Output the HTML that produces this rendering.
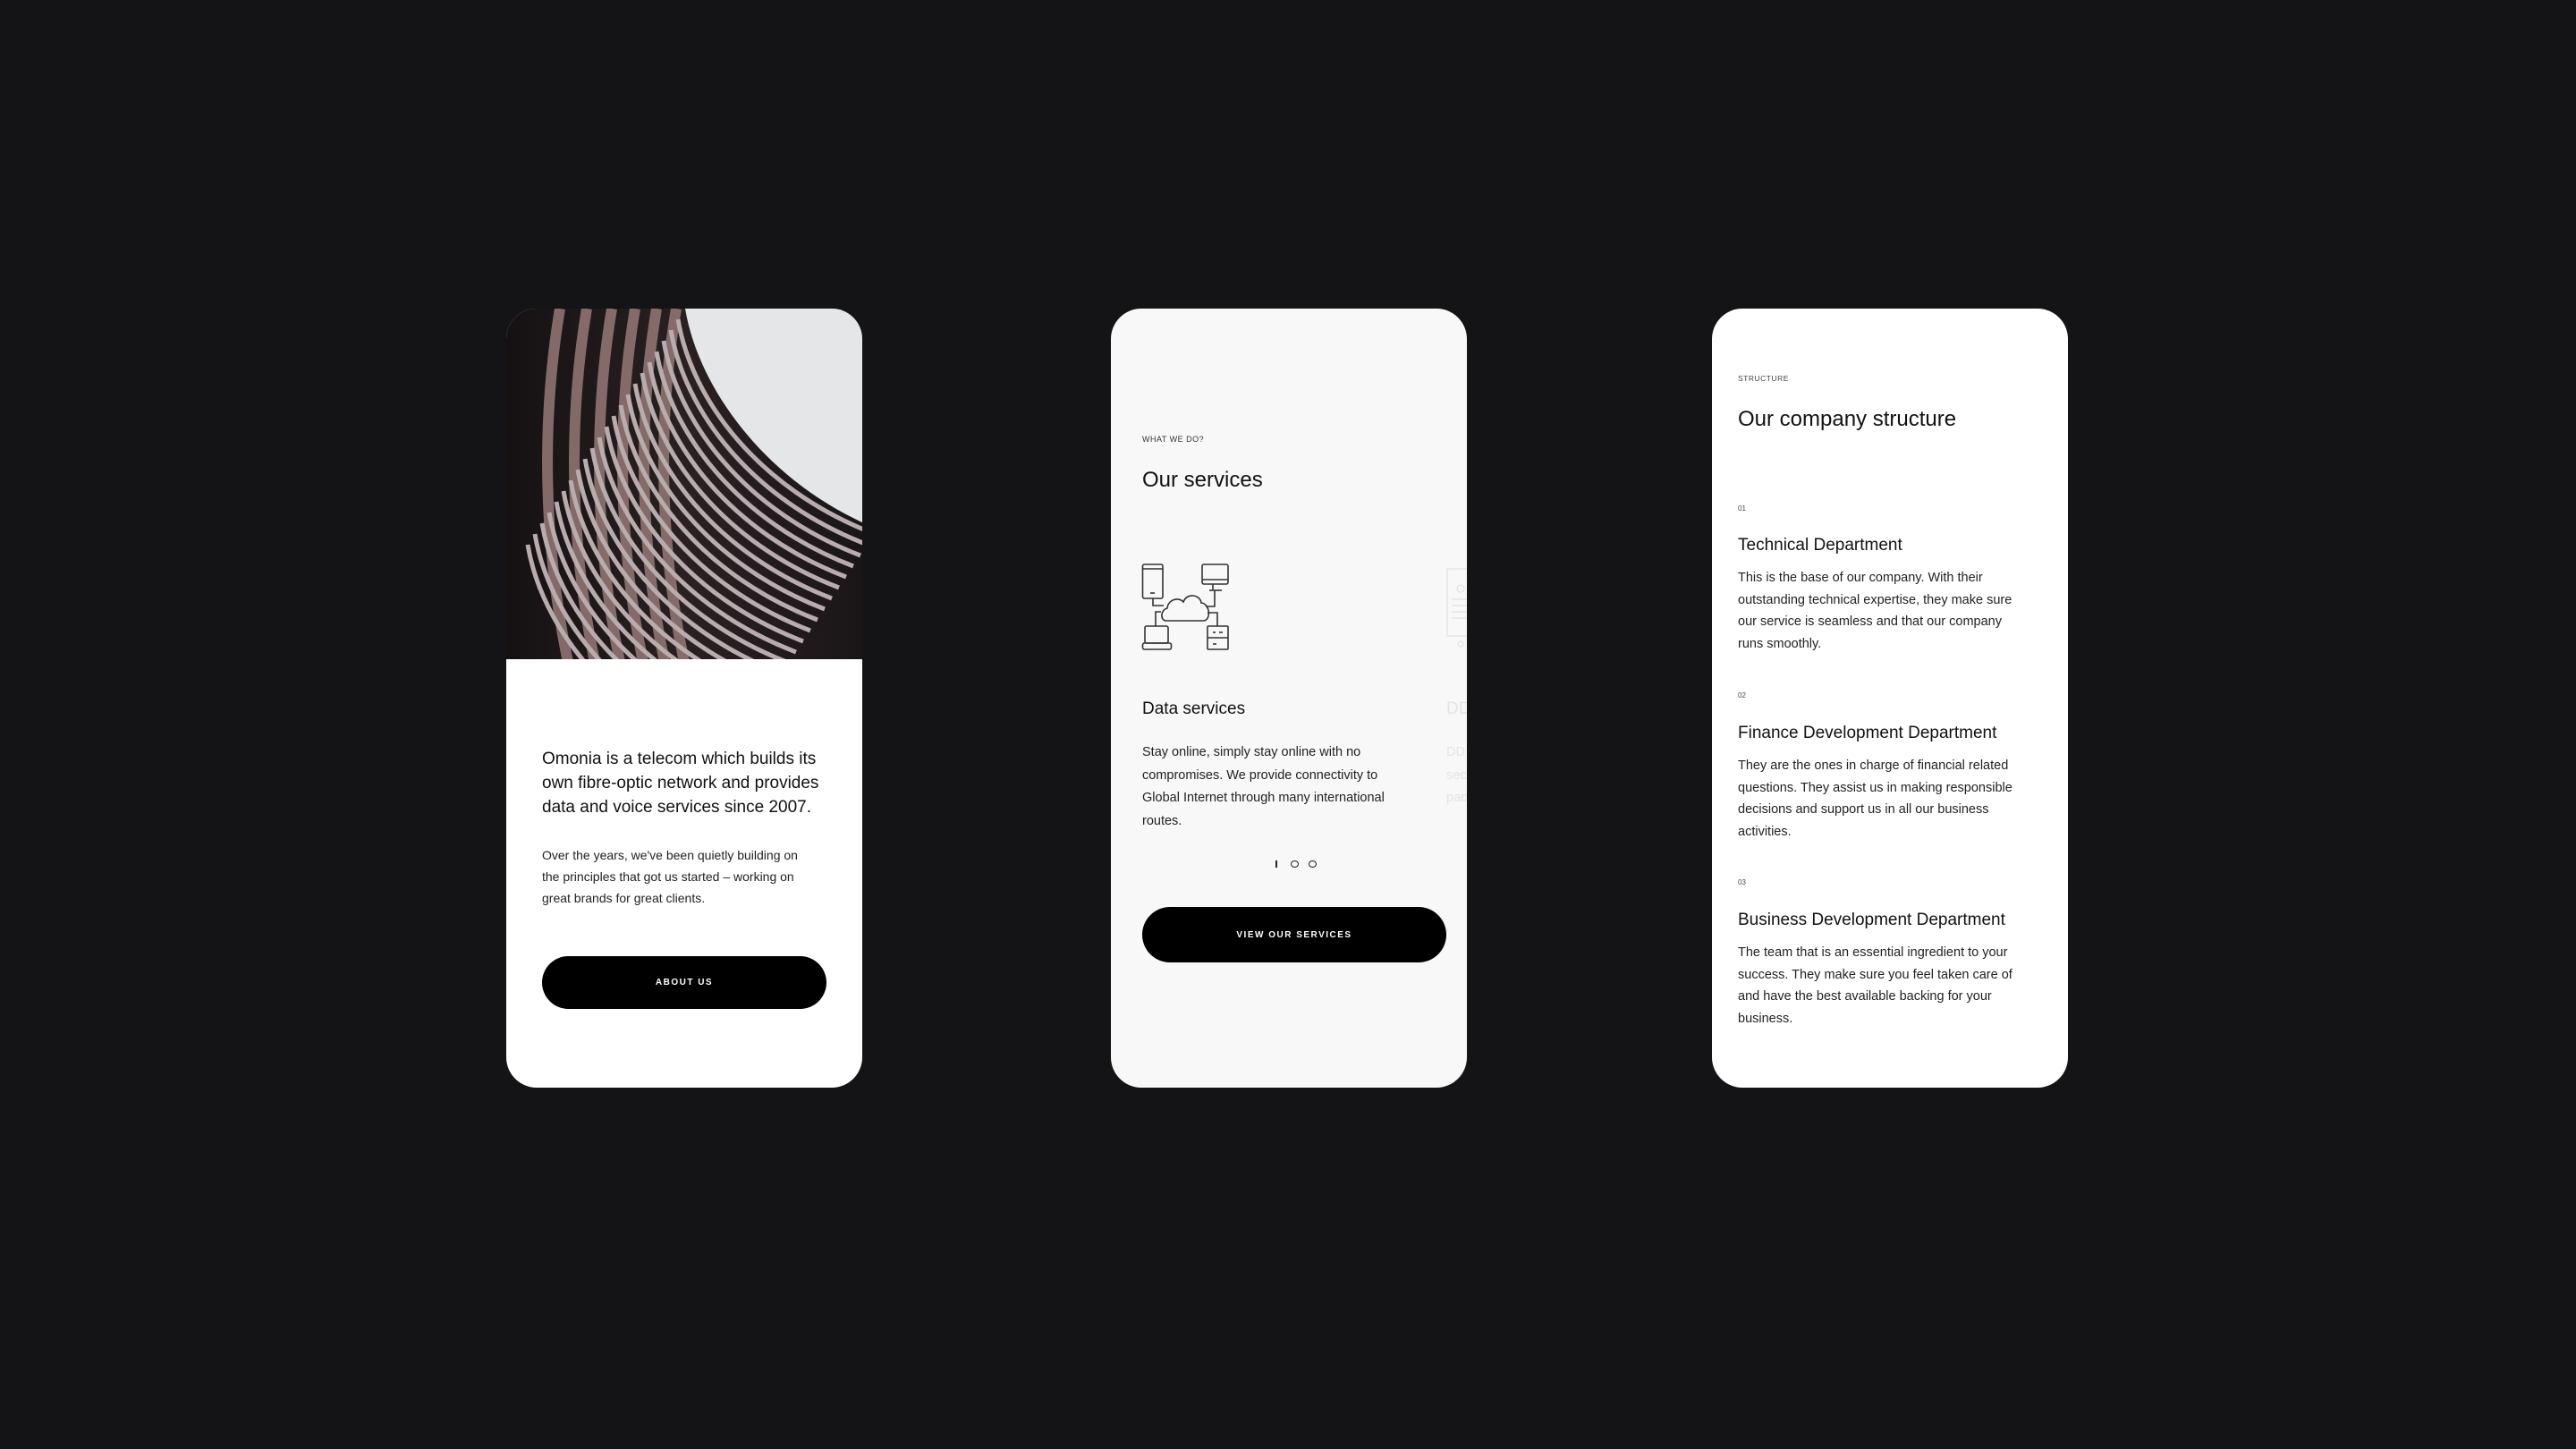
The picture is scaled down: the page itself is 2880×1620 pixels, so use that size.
<!DOCTYPE html>
<html><head><meta charset="utf-8"><style>
*{margin:0;padding:0;box-sizing:border-box}
body{width:2880px;height:1620px;background:#141416;position:relative;overflow:hidden;font-family:"Liberation Sans",sans-serif;color:#111}
.card{position:absolute;top:345px;width:398px;height:871px;border-radius:34px;overflow:hidden;background:#fff}
.t{position:absolute;white-space:nowrap}
.btn{position:absolute;background:#000;color:#fff;border-radius:40px;font-size:10px;font-weight:bold;letter-spacing:1.5px;display:flex;align-items:center;justify-content:center}
</style></head><body>

<div class="card" style="left:566px">
<svg width="398" height="392" viewBox="0 0 398 392" style="position:absolute;left:0;top:0">
<defs>
<linearGradient id="bg" x1="0" x2="1" y1="0" y2="0"><stop offset="0" stop-color="#151112"/><stop offset="0.5" stop-color="#2a2022"/><stop offset="1" stop-color="#1a1618"/></linearGradient>
<path id="s" d="M200 0 C215 90 290 190 420 240" fill="none"/>
<path id="p" d="M60 0 C40 120 40 260 70 400" fill="none"/>
</defs>
<rect width="398" height="392" fill="url(#bg)"/>
<g stroke="#8f7472" stroke-width="12" opacity="0.9">
<use href="#p"/><use href="#p" transform="translate(30,0)"/><use href="#p" transform="translate(58,0)"/><use href="#p" transform="translate(84,0)"/><use href="#p" transform="translate(108,0)"/><use href="#p" transform="translate(130,0)"/>
</g>
<g stroke="#b8acae" stroke-width="5">
<use href="#s" transform="translate(-8,12)"/><use href="#s" transform="translate(-16,24)"/><use href="#s" transform="translate(-24,36)"/><use href="#s" transform="translate(-32,48)"/><use href="#s" transform="translate(-40,60)"/><use href="#s" transform="translate(-48,72)"/><use href="#s" transform="translate(-56,84)"/><use href="#s" transform="translate(-64,96)"/><use href="#s" transform="translate(-72,108)"/><use href="#s" transform="translate(-80,120)"/><use href="#s" transform="translate(-88,132)"/><use href="#s" transform="translate(-96,144)"/><use href="#s" transform="translate(-104,156)"/><use href="#s" transform="translate(-112,168)"/><use href="#s" transform="translate(-120,180)"/><use href="#s" transform="translate(-128,192)"/><use href="#s" transform="translate(-136,204)"/><use href="#s" transform="translate(-144,216)"/><use href="#s" transform="translate(-152,228)"/><use href="#s" transform="translate(-160,240)"/><use href="#s" transform="translate(-168,252)"/><use href="#s" transform="translate(-176,264)"/>
</g>
<path d="M200 0 C215 90 290 190 400 240 L400 0 Z" fill="#e5e6e8"/>
</svg>
<div class="t" style="left:40px;top:490px;font-size:19px;line-height:27px;color:#111">Omonia is a telecom which builds its<br>own fibre-optic network and provides<br>data and voice services since 2007.</div>
<div class="t" style="left:40px;top:599px;font-size:14px;line-height:24px;color:#222">Over the years, we've been quietly building on<br>the principles that got us started – working on<br>great brands for great clients.</div>
<div class="btn" style="left:40px;top:724px;width:318px;height:59px">ABOUT US</div>
</div>

<div class="card" style="left:1242px;background:#f8f8f8">
<div class="t" style="left:35px;top:141px;font-size:9px;letter-spacing:0.5px;color:#333">WHAT WE DO?</div>
<div class="t" style="left:35px;top:178px;font-size:24px;color:#111">Our services</div>
<div class="t" style="left:35px;top:437px;font-size:19px;color:#111">Data services</div>
<div class="t" style="left:35px;top:484px;font-size:14.5px;line-height:25.5px;color:#222">Stay online, simply stay online with no<br>compromises. We provide connectivity to<br>Global Internet through many international<br>routes.</div>
<div class="t" style="left:375px;top:437px;font-size:19px;color:#e4e4e4">DD</div>
<div class="t" style="left:375px;top:484px;font-size:14.5px;line-height:25.5px;color:#e4e4e4">DD<br>sec<br>pac</div>
<div class="btn" style="left:35px;top:669px;width:340px;height:62px">VIEW OUR SERVICES</div>
</div>

<svg width="370" height="120" viewBox="0 0 370 120" style="position:absolute;left:1270px;top:620px" fill="none" stroke="#333" stroke-width="1.6">
<rect x="7.5" y="11" width="22.5" height="38" rx="2"/><line x1="7.5" y1="16" x2="30" y2="16"/><line x1="16" y1="43" x2="21" y2="43"/>
<rect x="74" y="11" width="29" height="22" rx="2"/><line x1="74" y1="28" x2="103" y2="28"/><line x1="86" y1="33" x2="86" y2="39"/><line x1="82" y1="40" x2="96" y2="40"/>
<path d="M34 74 C27 74 27 62 35 60 C36 50 48 47 53 53 C57 42 72 45 73 54 C83 55 84 73 76 74 Z"/>
<path d="M19 49 V57 H31"/><path d="M88 40 V58 H78"/><path d="M28 64 H22 V80"/><path d="M80 65 H91 V80"/>
<rect x="10" y="80" width="26" height="19" rx="2"/><rect x="7.5" y="99" width="32" height="7" rx="2"/>
<rect x="80" y="80" width="23" height="26" rx="1"/><line x1="80" y1="93" x2="103" y2="93"/><line x1="86" y1="87" x2="89" y2="87"/><line x1="93" y1="87" x2="97" y2="87"/><line x1="86" y1="100" x2="90" y2="100"/>
<g stroke="#e2e2e2" stroke-width="1.2"><rect x="348" y="16" width="30" height="75"/><line x1="353" y1="50" x2="370" y2="50"/><line x1="353" y1="57" x2="370" y2="57"/><line x1="353" y1="64" x2="370" y2="64"/><line x1="353" y1="71" x2="370" y2="71"/><circle cx="363" cy="38" r="4"/><circle cx="363" cy="100" r="3"/></g>
</svg>
<div style="position:absolute;left:1426px;top:962px;width:2px;height:8px;background:#222"></div>
<div style="position:absolute;left:1443px;top:962px;width:9px;height:8px;border:1.5px solid #222;border-radius:50%"></div>
<div style="position:absolute;left:1463px;top:962px;width:9px;height:8px;border:1.5px solid #222;border-radius:50%"></div>

<div class="card" style="left:1914px">
<div class="t" style="left:29px;top:73px;font-size:8.5px;letter-spacing:0.5px;color:#444">STRUCTURE</div>
<div class="t" style="left:29px;top:110px;font-size:24px;color:#111">Our company structure</div>
<div class="t" style="left:29px;top:219px;font-size:8px;color:#444">01</div>
<div class="t" style="left:29px;top:254px;font-size:19px;color:#111">Technical Department</div>
<div class="t" style="left:29px;top:289px;font-size:14.5px;line-height:24.5px;color:#222">This is the base of our company. With their<br>outstanding technical expertise, they make sure<br>our service is seamless and that our company<br>runs smoothly.</div>
<div class="t" style="left:29px;top:428px;font-size:8px;color:#444">02</div>
<div class="t" style="left:29px;top:464px;font-size:19px;color:#111">Finance Development Department</div>
<div class="t" style="left:29px;top:499px;font-size:14.5px;line-height:24.5px;color:#222">They are the ones in charge of financial related<br>questions. They assist us in making responsible<br>decisions and support us in all our business<br>activities.</div>
<div class="t" style="left:29px;top:637px;font-size:8px;color:#444">03</div>
<div class="t" style="left:29px;top:673px;font-size:19px;color:#111">Business Development Department</div>
<div class="t" style="left:29px;top:708px;font-size:14.5px;line-height:24.5px;color:#222">The team that is an essential ingredient to your<br>success. They make sure you feel taken care of<br>and have the best available backing for your<br>business.</div>
</div>
</body></html>
